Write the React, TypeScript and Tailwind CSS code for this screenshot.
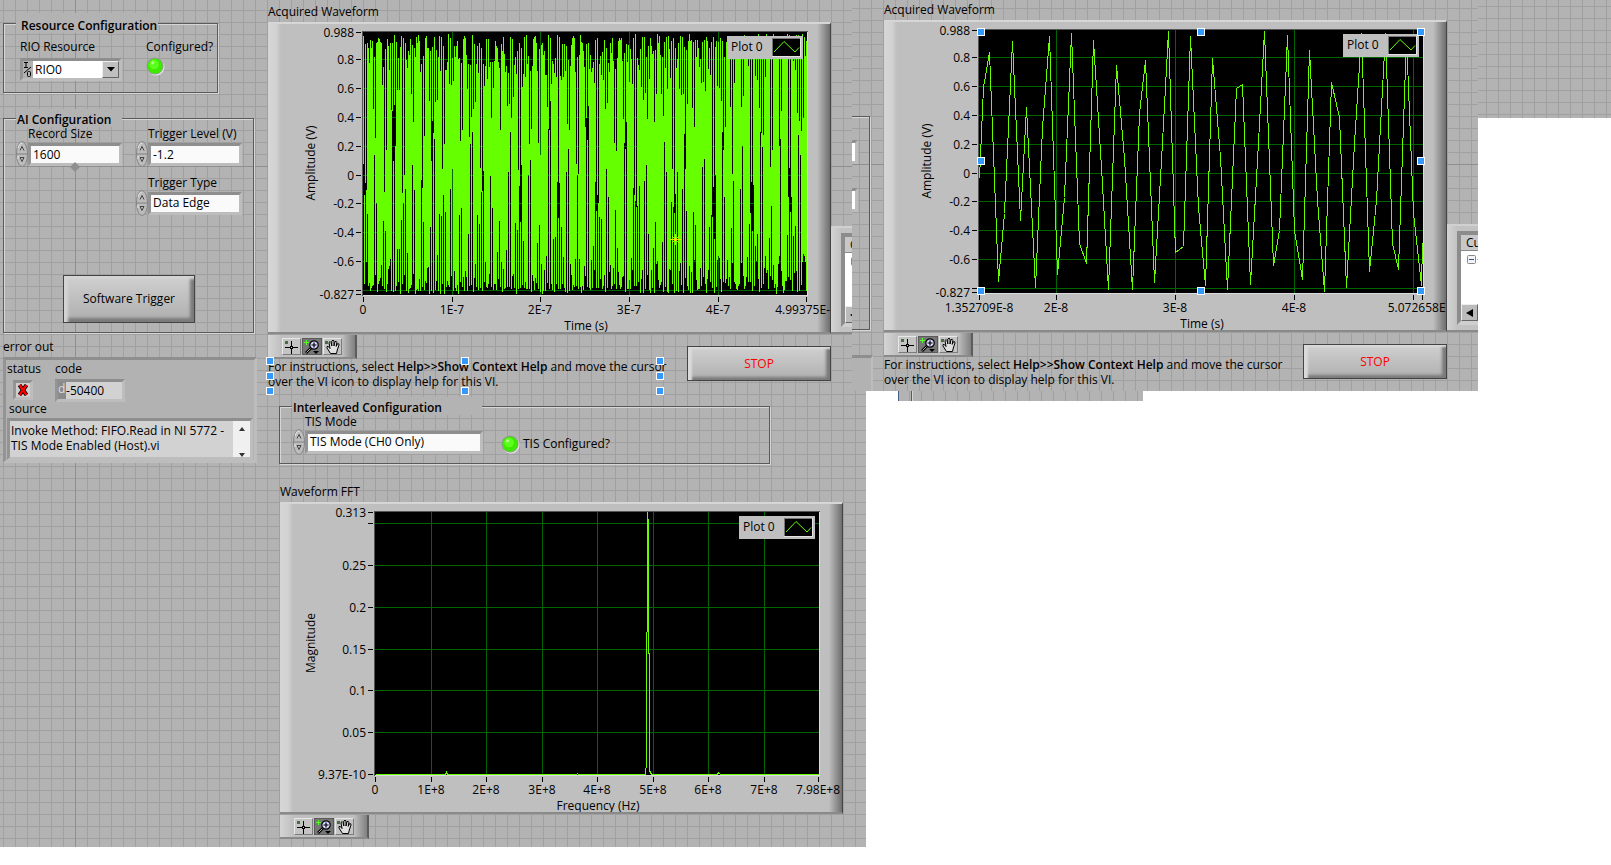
import React from 'react';
import clsx from 'clsx';

interface Tick {
  at: number;
  label?: string;
}

interface ChartProps {
  title: string;
  xLabel: string;
  yLabel: string;
  yLabelX: number;
  xTicks: Tick[];
  yTicks: Tick[];
  points?: string;
  path?: string;
  cursor?: { x: number; y: number };
  selected?: boolean;
}

const PLOT = { left: 95, top: 10, right: 539, bottom: 273 };

const voltTicks: Tick[] = [
  { at: 10, label: '0.988' },
  { at: 37, label: '0.8' },
  { at: 66, label: '0.6' },
  { at: 95, label: '0.4' },
  { at: 124, label: '0.2' },
  { at: 153, label: '0' },
  { at: 181, label: '-0.2' },
  { at: 210, label: '-0.4' },
  { at: 239, label: '-0.6' },
  { at: 268 },
  { at: 272, label: '-0.827' },
];

const magnitudeTicks: Tick[] = [
  { at: 10, label: '0.313' },
  { at: 21 },
  { at: 63, label: '0.25' },
  { at: 105, label: '0.2' },
  { at: 147, label: '0.15' },
  { at: 188, label: '0.1' },
  { at: 230, label: '0.05' },
  { at: 272, label: '9.37E-10' },
];

const recordTicks: Tick[] = [
  { at: 95, label: '0' },
  { at: 184, label: '1E-7' },
  { at: 272, label: '2E-7' },
  { at: 361, label: '3E-7' },
  { at: 450, label: '4E-7' },
  { at: 538, label: '4.99375E-7' },
];

const zoomTicks: Tick[] = [
  { at: 95, label: '1.352709E-8' },
  { at: 172, label: '2E-8' },
  { at: 291, label: '3E-8' },
  { at: 410, label: '4E-8' },
  { at: 529 },
  { at: 538, label: '5.072658E-8' },
];

const frequencyTicks: Tick[] = [
  { at: 95, label: '0' },
  { at: 151, label: '1E+8' },
  { at: 206, label: '2E+8' },
  { at: 262, label: '3E+8' },
  { at: 317, label: '4E+8' },
  { at: 373, label: '5E+8' },
  { at: 428, label: '6E+8' },
  { at: 484, label: '7E+8' },
  { at: 538, label: '7.98E+8' },
];

// 1600 samples of a 490 MHz tone taken at 3.2 GS/s, with some sampling jitter
const samples = Array.from({ length: 1600 }, (_, n) => {
  const phase = 2 * Math.PI * 0.1531 * n + 0.45 * Math.sin(n * 1.7) + 0.25 * Math.sin(n * 0.37);
  return 0.08 + 0.88 * Math.sin(phase) + 0.02 * Math.sin(n * 2.9);
});

// One vertical line per pixel column, from the lowest to the highest sample in it
const fullRecord = Array.from({ length: 444 }, (_, column) => {
  const start = Math.round((column / 444) * 1600);
  const part = samples.slice(start, Math.round(((column + 1) / 444) * 1600));
  if (start > 0) {
    part.push((samples[start - 1] + samples[start]) / 2);
  }
  const high = Math.round(153 - Math.max(...part) * 144);
  const low = Math.round(153 - Math.min(...part) * 144);
  return `M${PLOT.left + column} ${high}V${low + 1}`;
}).join('');

const zoomedRecord =
  '95,158 99,67 105,32 114,261 120,193 128,21 136,200 142,87 151,267 158,107 165,16 173,254 ' +
  '180,177 187,13 195,223 202,243 209,20 217,147 224,269 232,45 240,138 248,269 255,93 261,40 ' +
  '270,262 277,140 284,11 291,232 299,226 306,16 314,187 321,265 328,38 336,137 343,269 352,68 ' +
  '358,64 366,264 373,140 380,11 389,245 395,210 403,15 410,210 418,259 425,30 433,180 440,271 ' +
  '447,62 455,97 462,267 470,123 477,13 485,251 492,180 501,13 508,223 514,249 522,17 529,193 ' +
  '537,265 538,223';

const spectrum =
  '95,272 165,272 166,270 167,272 296,272 297,271 298,272 365,272 366,260 366,130 367,129 367,10 ' +
  '368,22 368,151 369,151 369,268 371,272 437,272 438,270 440,272 538,272';

const handleClass = 'absolute size-2 border border-white bg-[#3399ff]';

const Chart: React.FC<ChartProps> = ({
  title, xLabel, yLabel, yLabelX, xTicks, yTicks, points, path, cursor, selected,
}) => (
  <div className="h-[312px] w-[563px] shrink-0 overflow-hidden border-t-2 border-r border-b-2 border-t-[#d6d6d6] border-r-[#444] border-b-[#8a8a8a] bg-[linear-gradient(to_right,#d6d6d6_0,#d2d2d2_8px,#bfbfbf_13px,#bfbfbf_calc(100%-13px),#6e6e6e_100%)]">
    <svg width="562" height="308" viewBox="0 2 562 308" role="img" aria-label={title} className="block text-xs">
      <rect x={PLOT.left - 1} y={PLOT.top - 1} width="446" height="265" fill="#dcdcdc" />
      <path d="M94 274 V9 H540 V10 H95 V274 Z" fill="#555" />
      <rect x={PLOT.left} y={PLOT.top} width="444" height="263" fill="#000" />
      <g shapeRendering="crispEdges" fill="#006400">
        {yTicks.slice(1, -1).map((t) => (
          <rect key={t.at} x={PLOT.left} y={t.at} width="444" height="1" />
        ))}
        {xTicks.slice(1, -1).map((t) => (
          <rect key={t.at} x={t.at} y={PLOT.top} width="1" height="263" />
        ))}
      </g>
      <g fill="none" stroke="#66ff00" shapeRendering="crispEdges">
        {points && <polyline points={points} transform="translate(0.5 0.5)" />}
        {path && <path d={path} transform="translate(0.5 0)" />}
      </g>

      <g shapeRendering="crispEdges" fill="#000">
        {yTicks.map((t) => (
          <rect key={t.at} x="88" y={t.at} width="5" height="1" />
        ))}
        {xTicks.map((t) => (
          <rect key={t.at} x={t.at} y="275" width="1" height="5" />
        ))}
      </g>
      <g fill="#000">
        {yTicks.map((t) => t.label && (
          <text key={t.at} x="86" y={t.at + 5} textAnchor="end">{t.label}</text>
        ))}
        {xTicks.map((t) => t.label && (
          <text key={t.at} x={t.at} y="292" textAnchor="middle">{t.label}</text>
        ))}
        <text x="318" y="308" textAnchor="middle">{xLabel}</text>
        <text transform={`translate(${yLabelX} 141) rotate(-90)`} textAnchor="middle">{yLabel}</text>
      </g>

      {/* Plot legend */}
      <rect x="459" y="14" width="76" height="23" fill="#bfbfbf" />
      <text x="463" y="29">Plot 0</text>
      <rect x="504" y="16" width="29" height="19" fill="#e4e4e4" />
      <rect x="504" y="16" width="28" height="18" fill="#777" />
      <rect x="505" y="17" width="27" height="17" fill="#000" />
      <path d="M506 30 L516 19.5 L527 30 L531 25.5" fill="none" stroke="#66ff00" />

      {cursor && (
        <path
          d="M-5 0.5 H6 M0.5 -5 V6 M-3 -3 L4 4 M4 -3 L-3 4"
          transform={`translate(${cursor.x} ${cursor.y})`}
          stroke="#f0e000"
          fill="none"
        />
      )}
      {selected && [93, 313, 533].map((x) => [8, 137, 267].map((y) => (
        (x !== 313 || y !== 137) && (
          <rect key={`${x}-${y}`} x={x + 0.5} y={y + 0.5} width="7" height="7" fill="#3399ff" stroke="#fff" />
        )
      )))}
    </svg>
  </div>
);

const toolClass = 'h-[17px] w-[19px] border border-t-[#e8e8e8] border-l-[#e8e8e8] border-r-[#7c7c7c] border-b-[#7c7c7c] bg-[#c4c4c4]';

const GraphPalette = () => (
  <div className="mt-px flex h-6 w-[89px] items-start gap-px border-r-2 border-b-2 border-r-[#5c5c5c] border-b-[#8a8a8a] bg-[linear-gradient(to_right,#d4d4d4_0,#bfbfbf_14px,#bfbfbf_74px,#808080_100%)] pt-[3px] pl-3.5">
    <button className={toolClass} title="Cursor movement tool">
      <svg width="17" height="15" viewBox="1 1 17 15">
        <rect x="3" y="3" width="3" height="3" fill="#4c6a44" />
        <path d="M3 9.5 H16 M9.5 3 V16" stroke="#000" />
        <rect x="8" y="8" width="3" height="3" fill="#000" />
        <rect x="9" y="9" width="1" height="1" fill="#ccc" />
      </svg>
    </button>
    <button className="h-[17px] w-5 border border-[#5a5a5a] bg-[#777]" title="Zoom">
      <svg width="18" height="15" viewBox="1 1 18 15">
        <path d="M2 4.5 H7 M4.5 2 V7" stroke="#55ff22" />
        <path d="M4 15 L9 10" stroke="#000" strokeWidth="2.6" />
        <path d="M4.5 14.5 L8.5 10.5" stroke="#ddd" strokeWidth="0.8" />
        <circle cx="12" cy="7" r="4.2" fill="#d8d8ff" stroke="#000" strokeWidth="1.2" />
        <path d="M9.5 7 H14.5 M12 4.5 V9.5" stroke="#000" strokeWidth="1.2" />
        <path d="M11 13 H17 L14 16 Z" fill="#000" />
      </svg>
    </button>
    <button className={toolClass} title="Panning tool">
      <svg width="17" height="15" viewBox="1 1 17 15">
        <rect x="2" y="3" width="3" height="3" fill="#4c6a44" />
        <path
          d="M7.5 15.5 L4 10 L4 8.5 L5.3 8.5 L7 10.5 L6 4.5 L7.2 3.6 L8 4.5 L8.8 8 L8.8 3 L10 2.2 L11 3 L11 8 L12 3.6 L13.2 3.3 L13.8 4.4 L13.2 8.4 L14.6 5.6 L15.8 5.8 L16 7 L14.3 12 L13.5 15.5 Z"
          fill="#e0e0e0"
          stroke="#000"
        />
      </svg>
    </button>
  </div>
);

const StopButton = () => (
  <button className="mt-3 h-[35px] w-36 shrink-0 border border-[#444] bg-linear-to-b from-[#d0d0d0] to-[#b0b0b0] text-[#ff0000] shadow-[inset_4px_2px_2px_#dadada,inset_-4px_-3px_3px_#7a7a7a]">
    STOP
  </button>
);

const Instructions: React.FC<{ selected?: boolean }> = ({ selected }) => (
  <div className="relative w-[396px] leading-[15px] whitespace-nowrap">
    <p>
      For instructions, select <b className="font-semibold">Help&gt;&gt;Show Context Help</b> and move the cursor
      <br />
      over the VI icon to display help for this VI.
    </p>
    {selected && (
      <>
        <span className={clsx(handleClass, '-top-0.5 -left-0.5')} />
        <span className={clsx(handleClass, 'top-[13px] -left-0.5')} />
        <span className={clsx(handleClass, 'top-7 -left-0.5')} />
        <span className={clsx(handleClass, '-top-0.5 left-[193px]')} />
        <span className={clsx(handleClass, 'top-7 left-[193px]')} />
        <span className={clsx(handleClass, '-top-0.5 right-0')} />
        <span className={clsx(handleClass, 'top-[13px] right-0')} />
        <span className={clsx(handleClass, 'top-7 right-0')} />
      </>
    )}
  </div>
);

const CursorLegend = () => (
  <div className="mt-auto h-[108px] min-w-0 flex-1 overflow-hidden border-t-2 border-b-2 border-t-[#d0d0d0] border-b-[#8a8a8a] bg-[linear-gradient(to_right,#d4d4d4,#c2c2c2_10px)] pt-[5px] pl-2.5">
    <div className="h-[94px] w-16 border-4 border-t-[#8c8c8c] border-r-[#d0d0d0] border-b-[#cfcfcf] border-l-[#8c8c8c] bg-white">
      <div className="h-4 border-b border-[#8a8a8a] bg-[#c8c8c8] pl-[5px] leading-[15px]">Cu</div>
      <div className="h-[53px] pt-1 pl-1.5">
        <svg width="12" height="10">
          <rect x="0.5" y="0.5" width="8" height="8" rx="1" fill="#f4f4f4" stroke="#888" />
          <path d="M2 4.5 H7" stroke="#3050a0" />
          <path d="M10 4.5 H12" stroke="#aaa" />
        </svg>
      </div>
      <button className="flex h-[17px] w-[17px] items-center justify-center border border-t-[#eee] border-l-[#eee] border-r-[#666] border-b-[#666] bg-[#bbb]" title="Scroll left">
        <svg width="7" height="8"><path d="M7 0 V8 L0 4 Z" fill="#000" /></svg>
      </button>
    </div>
  </div>
);

const Led = () => (
  <svg width="19" height="19" viewBox="0 0 20 20">
    <circle cx="10.5" cy="10.5" r="9" fill="#e4e4e4" />
    <circle cx="9.5" cy="9.5" r="9" fill="#979797" />
    <circle cx="9.5" cy="9.5" r="8" fill="#3dea00" />
    <circle cx="8.5" cy="8" r="5" fill="#5cff1c" />
    <circle cx="7" cy="6" r="1.6" fill="#b6ff90" />
  </svg>
);

const Spinner = () => (
  <svg width="12" height="26" viewBox="0 0 12 26" className="shrink-0">
    <ellipse cx="6" cy="13" rx="5.5" ry="12.5" fill="#bcbcbc" stroke="#868686" />
    <path d="M2 7 Q3 2 6 2 M2 15 V18" stroke="#e6e6e6" fill="none" />
    <path d="M0 13 H12" stroke="#808080" />
    <path d="M4 9.5 L6 5.5 L8 9.5 M4 16.5 H8 L6 20.5 Z" stroke="#444" fill="none" />
  </svg>
);

const sunken = 'border-[3px] border-t-[#8e8e8e] border-l-[#949494] border-r-[#bdbdbd] border-b-[#bdbdbd]';
const groupClass = 'border border-[#5a5a5a] shadow-[1px_1px_0_#d6d6d6,inset_1px_1px_0_#d6d6d6]';
const legendClass = 'ml-3 bg-[#b3b3b3] font-semibold whitespace-nowrap';

interface FieldProps {
  id: string;
  label: string;
  value: string;
  enumerated?: boolean;
  wide?: boolean;
}

const Field: React.FC<FieldProps> = ({ id, label, value, enumerated, wide }) => {
  const boxClass = clsx(
    'h-[23px] appearance-none rounded-none bg-[#fafafa] px-0.5 text-xs outline-none',
    sunken,
    wide ? 'w-[178px]' : 'w-[94px]',
  );
  return (
    <div className="flex flex-col">
      <label htmlFor={id} className="pl-3">{label}</label>
      <div className="flex items-center">
        <Spinner />
        {enumerated ? (
          <select id={id} className={boxClass} defaultValue={value}>
            <option>{value}</option>
          </select>
        ) : (
          <input id={id} className={boxClass} defaultValue={value} />
        )}
      </div>
    </div>
  );
};

const ConfigurationColumn = () => (
  <aside className="w-[268px] shrink-0 pt-[13px] pl-[3px]">
    <fieldset className={clsx(groupClass, 'flex h-20 w-[215px]')}>
      <legend className={clsx(legendClass, 'w-[142px] pt-1.5 pl-[5px]')}>Resource Configuration</legend>
      <div className="flex pt-[7px] pl-4">
        <div className="flex w-[126px] flex-col gap-1">
          <label htmlFor="rio">RIO Resource</label>
          <div className={clsx(sunken, 'flex h-[23px] w-[102px] bg-[#b0b0b0]')}>
            <svg width="10" height="17" viewBox="0 0 10 17">
              <path d="M1 1.5 H5 M3 1.5 V6.5 M1 6.5 H5 M1 12 L8 6" stroke="#000" fill="none" />
              <rect x="4.5" y="10.5" width="3" height="5" rx="1" stroke="#000" fill="none" />
            </svg>
            <select id="rio" className="min-w-0 flex-1 appearance-none bg-white pl-0.5 text-xs outline-none">
              <option>RIO0</option>
            </select>
            <span className="flex w-[17px] items-center justify-center border border-t-[#eee] border-l-[#eee] border-r-[#666] border-b-[#666] bg-[#c0c0c0]">
              <svg width="8" height="5"><path d="M0 0 H8 L4 4.5 Z" fill="#000" /></svg>
            </span>
          </div>
        </div>
        <div className="flex flex-col gap-[3px]">
          <span>Configured?</span>
          <Led />
        </div>
      </div>
    </fieldset>

    <fieldset className={clsx(groupClass, 'mt-4 h-[224px] w-[251px]')}>
      <legend className={clsx(legendClass, 'w-[106px] pt-1 pl-px')}>AI Configuration</legend>
      <div className="flex gap-3.5 pl-3">
        <Field id="record" label="Record Size" value="1600" />
        <div className="flex flex-col gap-[9px]">
          <Field id="level" label="Trigger Level (V)" value="-1.2" />
          <Field id="type" label="Trigger Type" value="Data Edge" enumerated />
        </div>
      </div>
      <button className="mt-[59px] ml-[59px] h-12 w-[132px] border border-[#444] bg-linear-to-b from-[#d0d0d0] to-[#aeaeae] shadow-[inset_4px_3px_3px_#d4d4d4,inset_-4px_-4px_3px_#7a7a7a]">
        Software Trigger
      </button>
    </fieldset>

    <p className="mt-[7px]">error out</p>
    <div className={clsx(sunken, 'mt-[3px] h-[106px] w-[254px] bg-[#b2b2b2] px-px')}>
      <div className="flex gap-3.5 pt-0.5">
        <div className="flex flex-col gap-1">
          <span>status</span>
          <span className={clsx(sunken, 'ml-1.5 flex h-5 w-5 items-center justify-center bg-[#cfcfcf]')}>
            <svg width="12" height="12" viewBox="0 0 12 12">
              <path d="M2.5 1 L9.5 11 M9.5 1 L2.5 11" stroke="#000" strokeWidth="4" />
              <path d="M2.5 1 L9.5 11 M9.5 1 L2.5 11" stroke="#f00" strokeWidth="2.4" />
            </svg>
          </span>
        </div>
        <div className="flex flex-col gap-[3px]">
          <label htmlFor="code">code</label>
          <div className={clsx(sunken, 'flex h-[23px] w-[70px]')}>
            <span className="w-2 bg-[#8a8a8a] text-[#ddd]">d</span>
            <input id="code" readOnly value="-50400" className="min-w-0 flex-1 bg-[#d2d2d2] text-xs outline-none" />
          </div>
        </div>
      </div>
      <label htmlFor="source" className="block pl-0.5">source</label>
      <div className={clsx(sunken, 'mt-0.5 flex h-[42px] w-[246px]')}>
        <textarea
          id="source"
          readOnly
          className="h-full min-w-0 flex-1 resize-none overflow-hidden bg-[#d2d2d2] pt-0.5 pl-px text-xs leading-[15px] outline-none"
          value={'Invoke Method: FIFO.Read in NI 5772 -\nTIS Mode Enabled (Host).vi'}
        />
        <div className="flex w-[17px] flex-col items-center justify-between bg-[#f0f0f0] pt-1.5">
          <svg width="6" height="4"><path d="M0 4 L3 0 L6 4 Z" fill="#333" /></svg>
          <svg width="6" height="4"><path d="M0 0 H6 L3 4 Z" fill="#333" /></svg>
        </div>
      </div>
    </div>
  </aside>
);

const FrontPanel = () => (
  <section className="relative flex h-[847px] w-[866px] shrink-0 bg-[#b3b3b3] [background-image:linear-gradient(to_right,transparent_75px,#8f8f8f_75px,#8f8f8f_76px,transparent_76px),linear-gradient(transparent_166px,#8f8f8f_166px,#8f8f8f_167px,transparent_167px),linear-gradient(to_right,#a0a0a0_1px,transparent_1px),linear-gradient(#a0a0a0_1px,transparent_1px)] [background-position:0_0,0_0,3px_10px,3px_10px] [background-size:100%_100%,100%_100%,12px_12px,12px_12px]">
    <ConfigurationColumn />
    <svg width="10" height="10" className="absolute top-[162px] left-[70px]">
      <path d="M5 0 L10 5 L5 10 L0 5 Z" fill="#909090" />
    </svg>

    <div className="min-w-0 flex-1 pt-[5px]">
      <h2>Acquired Waveform</h2>
      <div className="mt-[3px] flex">
        <Chart
          title="Acquired Waveform"
          xLabel="Time (s)"
          yLabel="Amplitude (V)"
          yLabelX={47}
          xTicks={recordTicks}
          yTicks={voltTicks}
          path={fullRecord}
          cursor={{ x: 407, y: 217 }}
        />
        <CursorLegend />
      </div>
      <div className="flex w-[563px] justify-between">
        <div>
          <GraphPalette />
          <Instructions selected />
        </div>
        <StopButton />
      </div>

      <fieldset className={clsx(groupClass, 'mt-2 ml-[11px] h-[67px] w-[491px]')}>
        <legend className={clsx(legendClass, 'w-[190px] pt-1 pl-px')}>Interleaved Configuration</legend>
        <div className="flex pl-[13px]">
          <Field id="tis" label="TIS Mode" value="TIS Mode (CH0 Only)" enumerated wide />
          <div className="flex items-center gap-[3px] pt-[18px] pl-[18px]">
            <Led />
            <span>TIS Configured?</span>
          </div>
        </div>
      </fieldset>

      <div className="mt-[21px] ml-3">
        <h2 className="mb-[3px]">Waveform FFT</h2>
        <Chart
          title="Waveform FFT"
          xLabel="Frequency (Hz)"
          yLabel="Magnitude"
          yLabelX={35}
          xTicks={frequencyTicks}
          yTicks={magnitudeTicks}
          points={spectrum}
        />
        <GraphPalette />
      </div>
    </div>
  </section>
);

// Right edge of the configuration column that stays visible in the second window
const ColumnEdge = () => (
  <div className="w-8 shrink-0 pt-[116px]">
    <div className="h-[214px] w-[18px] border-t border-r border-b border-[#5a5a5a] pt-[23px] shadow-[1px_1px_0_#d6d6d6,inset_0_1px_0_#d6d6d6]">
      <div className="h-6 w-1.5 border-t-[3px] border-r-[3px] border-b-[3px] border-t-[#8e8e8e] border-r-[#bdbdbd] border-b-[#bdbdbd] bg-white" />
      <div className="mt-6 h-6 w-1.5 border-t-[3px] border-r-[3px] border-b-[3px] border-t-[#8e8e8e] border-r-[#bdbdbd] border-b-[#bdbdbd] bg-white" />
    </div>
    <div className="mt-[25px] h-9 w-[21px] border-t-[3px] border-r-2 border-t-[#8e8e8e] border-r-[#bdbdbd] bg-[#b2b2b2]" />
  </div>
);

const ZoomedPanel = () => (
  <section className="flex h-[391px] w-[626px] shrink-0 overflow-hidden bg-[#b3b3b3] [background-image:linear-gradient(transparent_164px,#8f8f8f_164px,#8f8f8f_165px,transparent_165px),linear-gradient(to_right,#a0a0a0_1px,transparent_1px),linear-gradient(#a0a0a0_1px,transparent_1px)] [background-position:0_0,7px_8px,7px_8px] [background-size:100%_100%,12px_12px,12px_12px]">
    <ColumnEdge />
    <div className="min-w-0 flex-1 pt-[3px]">
      <h2>Acquired Waveform</h2>
      <div className="mt-[3px] flex">
        <Chart
          title="Acquired Waveform, zoomed"
          xLabel="Time (s)"
          yLabel="Amplitude (V)"
          yLabelX={47}
          xTicks={zoomTicks}
          yTicks={voltTicks}
          points={zoomedRecord}
          selected
        />
        <CursorLegend />
      </div>
      <div className="flex w-[563px] justify-between">
        <div>
          <GraphPalette />
          <Instructions />
        </div>
        <StopButton />
      </div>
    </div>
  </section>
);

export default function App() {
  return (
    <main className="flex min-h-screen items-start overflow-hidden bg-white font-['Open_Sans','Noto_Sans',sans-serif] text-xs leading-[14px] text-black">
      <FrontPanel />
      <div className="z-10 -ml-3.5 min-w-0 flex-1">
        <div className="flex items-start">
          <ZoomedPanel />
          <div className="h-[118px] min-w-0 flex-1 bg-[#b3b3b3] [background-image:linear-gradient(to_right,#a0a0a0_1px,transparent_1px),linear-gradient(#a0a0a0_1px,transparent_1px)] [background-position:8px_6px] [background-size:12px_12px]" />
        </div>
        <div className="ml-[46px] flex h-2.5 w-[245px] border-l border-[#456080] bg-[#b3b3b3] [background-image:linear-gradient(to_right,#a0a0a0_1px,transparent_1px)] [background-position:10px_0] [background-size:12px_12px]">
          <div className="ml-3 w-0.5 border-l border-[#5a5a5a] bg-[#d6d6d6]" />
        </div>
      </div>
    </main>
  );
}
